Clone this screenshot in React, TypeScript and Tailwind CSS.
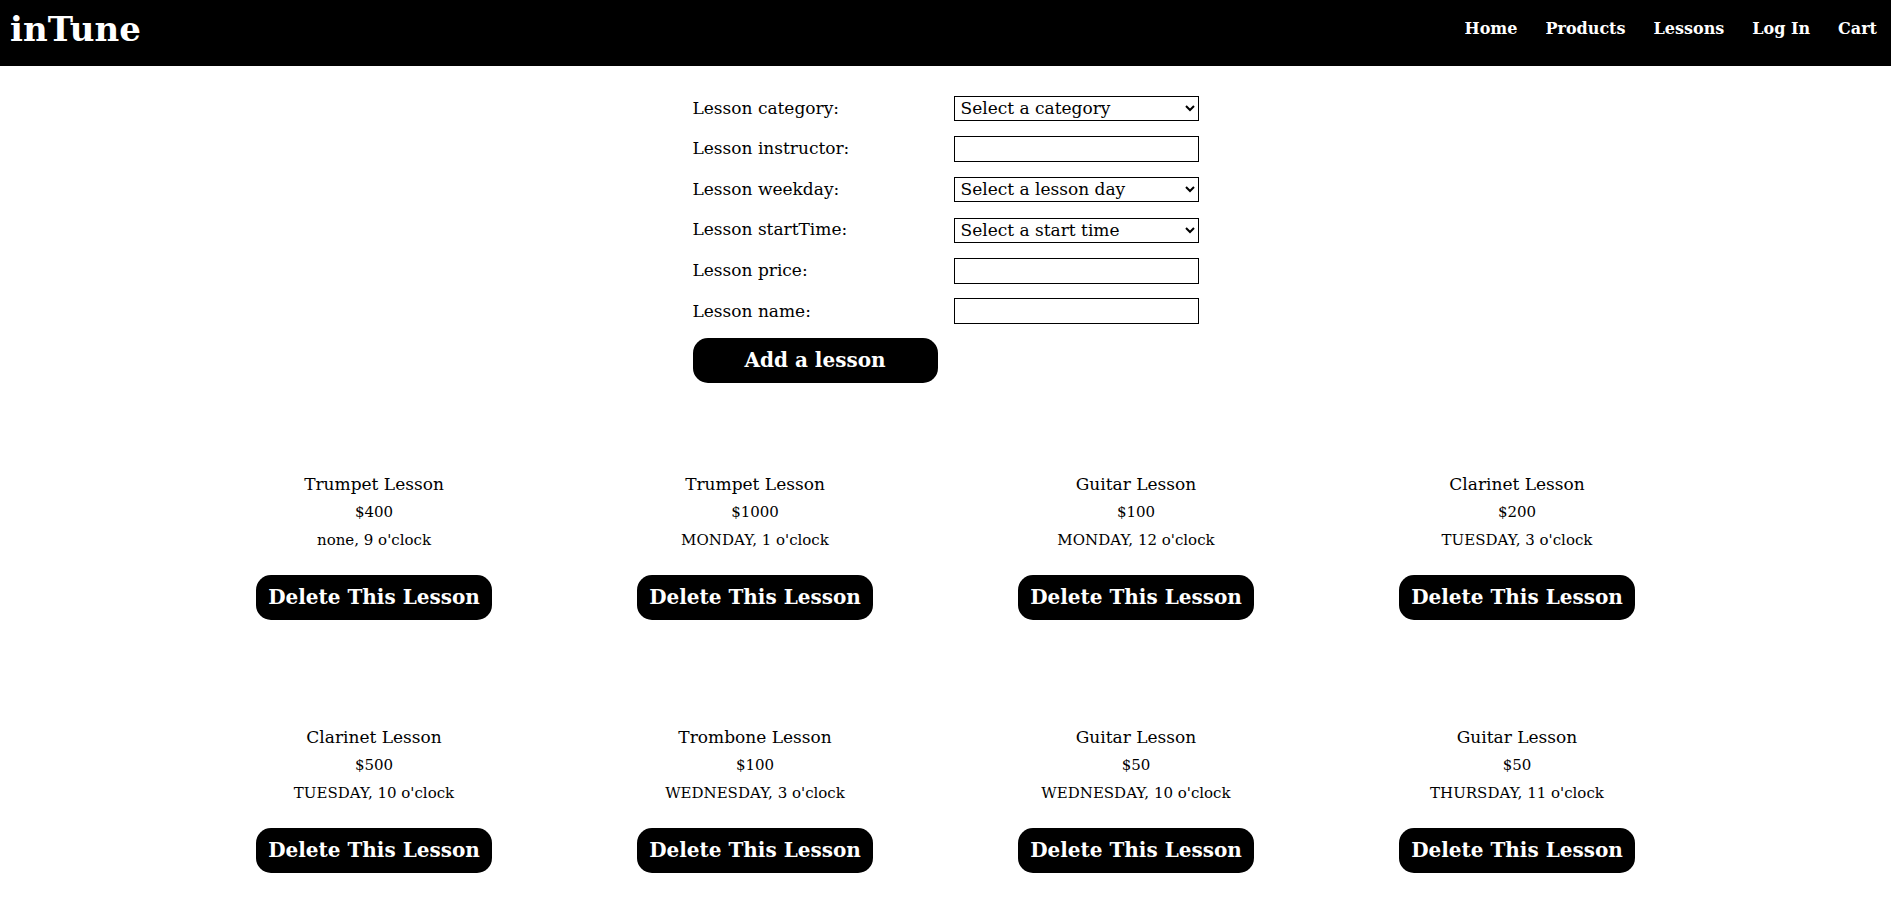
import { useState } from "react";

type Lesson = { name: string; price: number; day: string; time: number };

const lessons: Lesson[] = [
  { name: "Trumpet Lesson", price: 400, day: "none", time: 9 },
  { name: "Trumpet Lesson", price: 1000, day: "MONDAY", time: 1 },
  { name: "Guitar Lesson", price: 100, day: "MONDAY", time: 12 },
  { name: "Clarinet Lesson", price: 200, day: "TUESDAY", time: 3 },
  { name: "Clarinet Lesson", price: 500, day: "TUESDAY", time: 10 },
  { name: "Trombone Lesson", price: 100, day: "WEDNESDAY", time: 3 },
  { name: "Guitar Lesson", price: 50, day: "WEDNESDAY", time: 10 },
  { name: "Guitar Lesson", price: 50, day: "THURSDAY", time: 11 }
];

const navLinks = ["Home", "Products", "Lessons", "Log In", "Cart"];

export default function App() {
  const [items, setItems] = useState(lessons);

  return (
    <div className="min-h-screen bg-white text-black font-['DejaVu_Serif','Liberation_Serif',serif]">
      <header className="flex h-[66px] items-center justify-between bg-black px-[10px] pb-[8px] text-white">
        <div className="text-[34px] font-semibold leading-none">inTune</div>
        <nav className="flex items-center gap-[28px] pr-[4px] text-[16px] font-bold">
          {navLinks.map((link) => (
            <a key={link} href="#" className="text-white">
              {link}
            </a>
          ))}
        </nav>
      </header>

      <main>
        <form className="mx-auto w-[506px] pt-[22px]" onSubmit={(e) => e.preventDefault()}>
          <div className="grid grid-cols-[261px_245px] text-[17px]">
            <FormRow label="Lesson category:">
              <select className="h-[25px] w-full border border-black px-[2px] text-[17px]">
                <option>Select a category</option>
              </select>
            </FormRow>
            <FormRow label="Lesson instructor:">
              <input className="h-[26px] w-full border border-black px-1" />
            </FormRow>
            <FormRow label="Lesson weekday:">
              <select className="h-[25px] w-full border border-black px-[2px] text-[17px]">
                <option>Select a lesson day</option>
              </select>
            </FormRow>
            <FormRow label="Lesson startTime:">
              <select className="h-[25px] w-full border border-black px-[2px] text-[17px]">
                <option>Select a start time</option>
              </select>
            </FormRow>
            <FormRow label="Lesson price:">
              <input className="h-[26px] w-full border border-black px-1" />
            </FormRow>
            <FormRow label="Lesson name:">
              <input className="h-[26px] w-full border border-black px-1" />
            </FormRow>
          </div>
          <button
            type="submit"
            className="mt-[6px] h-[45px] w-[245px] rounded-[15px] bg-black text-[20px] font-bold text-white"
          >
            Add a lesson
          </button>
        </form>

        <section className="mx-auto mt-[87px] grid w-[1524px] grid-cols-4">
          {items.map((lesson, index) => (
            <div key={index} className="flex h-[253px] flex-col items-center text-center">
              <div className="text-[17px] leading-[28px]">{lesson.name}</div>
              <div className="text-[15px] leading-[28px]">${lesson.price}</div>
              <div className="text-[15px] leading-[28px]">
                {lesson.day}, {lesson.time} o'clock
              </div>
              <button
                type="button"
                className="mt-[21px] h-[45px] rounded-[15px] bg-black px-[12px] text-[20px] font-bold text-white"
                onClick={() => setItems((current) => current.filter((_, i) => i !== index))}
              >
                Delete This Lesson
              </button>
            </div>
          ))}
        </section>
      </main>
    </div>
  );
}

function FormRow({ label, children }: { label: string; children: React.ReactNode }) {
  return (
    <>
      <label className="flex h-[40.6px] items-center">{label}</label>
      <div className="flex h-[40.6px] items-center">{children}</div>
    </>
  );
}
